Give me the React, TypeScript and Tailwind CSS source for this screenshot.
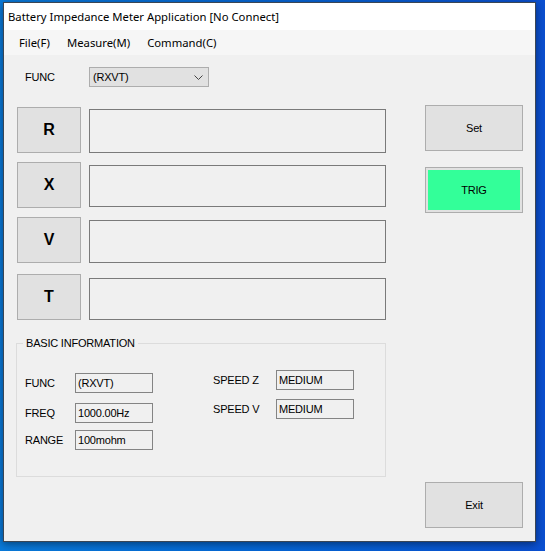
import React from "react";

const ui = "font-['Liberation_Sans',Arial,sans-serif]";

function Btn({ children, className = "" }: { children: React.ReactNode; className?: string }) {
  return (
    <div
      className={`flex items-center justify-center border border-[#adadad] bg-[#e1e1e1] text-black ${className}`}
    >
      {children}
    </div>
  );
}

function MeasRow({ label, mt, boxMt, boxH }: { label: string; mt: string; boxMt: string; boxH: string }) {
  return (
    <div className={`flex gap-[8px] ${mt}`}>
      <Btn className="w-[64px] h-[46px] text-[16px] font-bold">{label}</Btn>
      <div className={`w-[297px] border border-[#7a7a7a] bg-[#f0f0f0] ${boxMt} ${boxH}`} />
    </div>
  );
}

function InfoRow({ label, value, mt, labelW }: { label: string; value: string; mt: string; labelW: string }) {
  return (
    <div className={`flex items-center ${mt}`}>
      <div className={`${labelW} text-[11px] leading-[14px] tracking-[-0.2px]`}>{label}</div>
      <div className="w-[78px] h-[20px] border border-[#848484] bg-[#f0f0f0] pl-[2px] flex items-center text-[11px] leading-[14px] tracking-[-0.2px]">
        {value}
      </div>
    </div>
  );
}

export default function App() {
  return (
    <div className="w-[545px] h-[551px] overflow-hidden bg-gradient-to-r from-[#0a7ada] to-[#0b4fd0] pl-[3px] pt-[2px]">
      <div className="w-[533px] h-[540px] border border-[#3b4654] bg-[#f0f0f0] flex flex-col shadow-[0_2px_8px_rgba(0,0,0,0.45)] text-black">
        {/* Title bar */}
        <div className="h-[27px] bg-white flex items-center pl-[4px] font-['Noto_Sans',sans-serif] text-[11.3px] leading-none">
          Battery Impedance Meter Application [No Connect]
        </div>
        {/* Menu bar */}
        <div className="h-[25px] bg-[#f6f6f6] flex items-center pl-[15px] gap-[17px] font-['Noto_Sans',sans-serif] text-[11.3px] leading-none">
          <span>File(F)</span>
          <span>Measure(M)</span>
          <span>Command(C)</span>
        </div>
        {/* Body */}
        <div className={`flex-1 flex pl-[13px] ${ui}`}>
          <div className="w-[369px] flex flex-col">
            <div className="mt-[12px] h-[20px] flex items-center">
              <div className="pl-[8px] w-[72px] text-[11px] tracking-[-0.2px]">FUNC</div>
              <div className="w-[120px] h-[20px] border border-[#adadad] bg-[#e1e1e1] flex items-center justify-between pl-[3px] pr-[5px] text-[11px] tracking-[-0.2px]">
                <span>(RXVT)</span>
                <svg width="9" height="5" viewBox="0 0 9 5" fill="none">
                  <polyline points="0.5,0.5 4.5,4.5 8.5,0.5" stroke="#444" strokeWidth="1" />
                </svg>
              </div>
            </div>
            <MeasRow label="R" mt="mt-[20px]" boxMt="mt-[2px]" boxH="h-[44px]" />
            <MeasRow label="X" mt="mt-[9px]" boxMt="mt-[3px]" boxH="h-[42px]" />
            <MeasRow label="V" mt="mt-[9px]" boxMt="mt-[3px]" boxH="h-[43px]" />
            <MeasRow label="T" mt="mt-[11px]" boxMt="mt-[4px]" boxH="h-[42px]" />
            {/* Group box */}
            <div className="relative mt-[23px] -ml-[1px] w-[370px] h-[134px] border border-[#dcdcdc] flex">
              <span className="absolute left-[6px] -top-[8px] px-[3px] bg-[#f0f0f0] text-[11px] leading-[14px] tracking-[-0.2px]">
                BASIC INFORMATION
              </span>
              <div className="pl-[8px] flex flex-col">
                <InfoRow label="FUNC" value="(RXVT)" mt="mt-[29px]" labelW="w-[50px]" />
                <InfoRow label="FREQ" value="1000.00Hz" mt="mt-[10px]" labelW="w-[50px]" />
                <InfoRow label="RANGE" value="100mohm" mt="mt-[7px]" labelW="w-[50px]" />
              </div>
              <div className="ml-[60px] flex flex-col">
                <InfoRow label="SPEED Z" value="MEDIUM" mt="mt-[26px]" labelW="w-[63px]" />
                <InfoRow label="SPEED V" value="MEDIUM" mt="mt-[9px]" labelW="w-[63px]" />
              </div>
            </div>
          </div>
          {/* Right column */}
          <div className="ml-[39px] flex flex-col text-[11px] tracking-[-0.2px]">
            <Btn className="mt-[50px] w-[98px] h-[46px]">Set</Btn>
            <div className="mt-[16px] w-[98px] h-[46px] border border-[#adadad] bg-[#e1e1e1] p-[2px]">
              <div className="w-full h-full bg-[#33ff99] flex items-center justify-center">TRIG</div>
            </div>
            <Btn className="mt-[269px] w-[98px] h-[46px]">Exit</Btn>
          </div>
        </div>
      </div>
    </div>
  );
}
